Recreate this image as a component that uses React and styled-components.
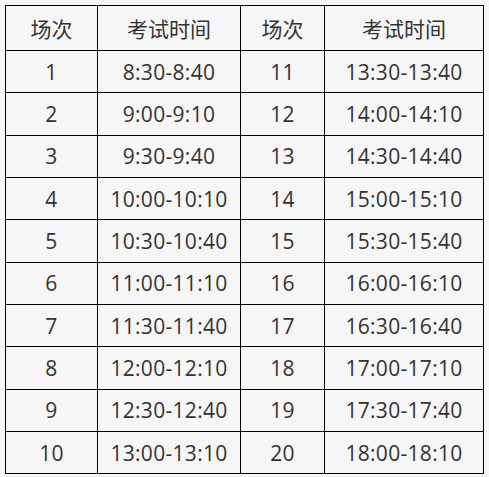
import React from "react";
import styled, { createGlobalStyle } from "styled-components";

const GlobalStyle = createGlobalStyle`
    html, body {
        margin: 0;
        padding: 0;
        background-color: #f6f6f6;
    }
`;

const StyledPage = styled.div`
    padding: 5px 0 0 5px;
`;

const StyledTable = styled.table`
    border-collapse: collapse;
    table-layout: fixed;
    width: 478px;
    font-family: "Open Sans", "Noto Sans CJK SC", sans-serif;
    font-size: 21px;
    color: #333333;
`;

const StyledCell = styled.td`
    border: 1px solid #000000;
    padding: 0;
    text-align: center;
    height: ${(props) => (props.head ? "44px" : "41.33px")};
    letter-spacing: ${(props) => (props.head ? "0" : "0.3px")};
`;

const columns = ["92px", "143px", "84px", "159px"];

const sessions = [
    ["1", "8:30-8:40", "11", "13:30-13:40"],
    ["2", "9:00-9:10", "12", "14:00-14:10"],
    ["3", "9:30-9:40", "13", "14:30-14:40"],
    ["4", "10:00-10:10", "14", "15:00-15:10"],
    ["5", "10:30-10:40", "15", "15:30-15:40"],
    ["6", "11:00-11:10", "16", "16:00-16:10"],
    ["7", "11:30-11:40", "17", "16:30-16:40"],
    ["8", "12:00-12:10", "18", "17:00-17:10"],
    ["9", "12:30-12:40", "19", "17:30-17:40"],
    ["10", "13:00-13:10", "20", "18:00-18:10"],
];

const App = () => {
    return (
        <StyledPage>
            <GlobalStyle />
            <StyledTable>
                <colgroup>
                    {columns.map((w, i) => (
                        <col key={i} style={{ width: w }} />
                    ))}
                </colgroup>
                <tbody>
                    <tr>
                        <StyledCell head>场次</StyledCell>
                        <StyledCell head>考试时间</StyledCell>
                        <StyledCell head>场次</StyledCell>
                        <StyledCell head>考试时间</StyledCell>
                    </tr>
                    {sessions.map((row) => (
                        <tr key={row[0]}>
                            {row.map((text, i) => (
                                <StyledCell key={i}>{text}</StyledCell>
                            ))}
                        </tr>
                    ))}
                </tbody>
            </StyledTable>
        </StyledPage>
    );
};

export default App;
